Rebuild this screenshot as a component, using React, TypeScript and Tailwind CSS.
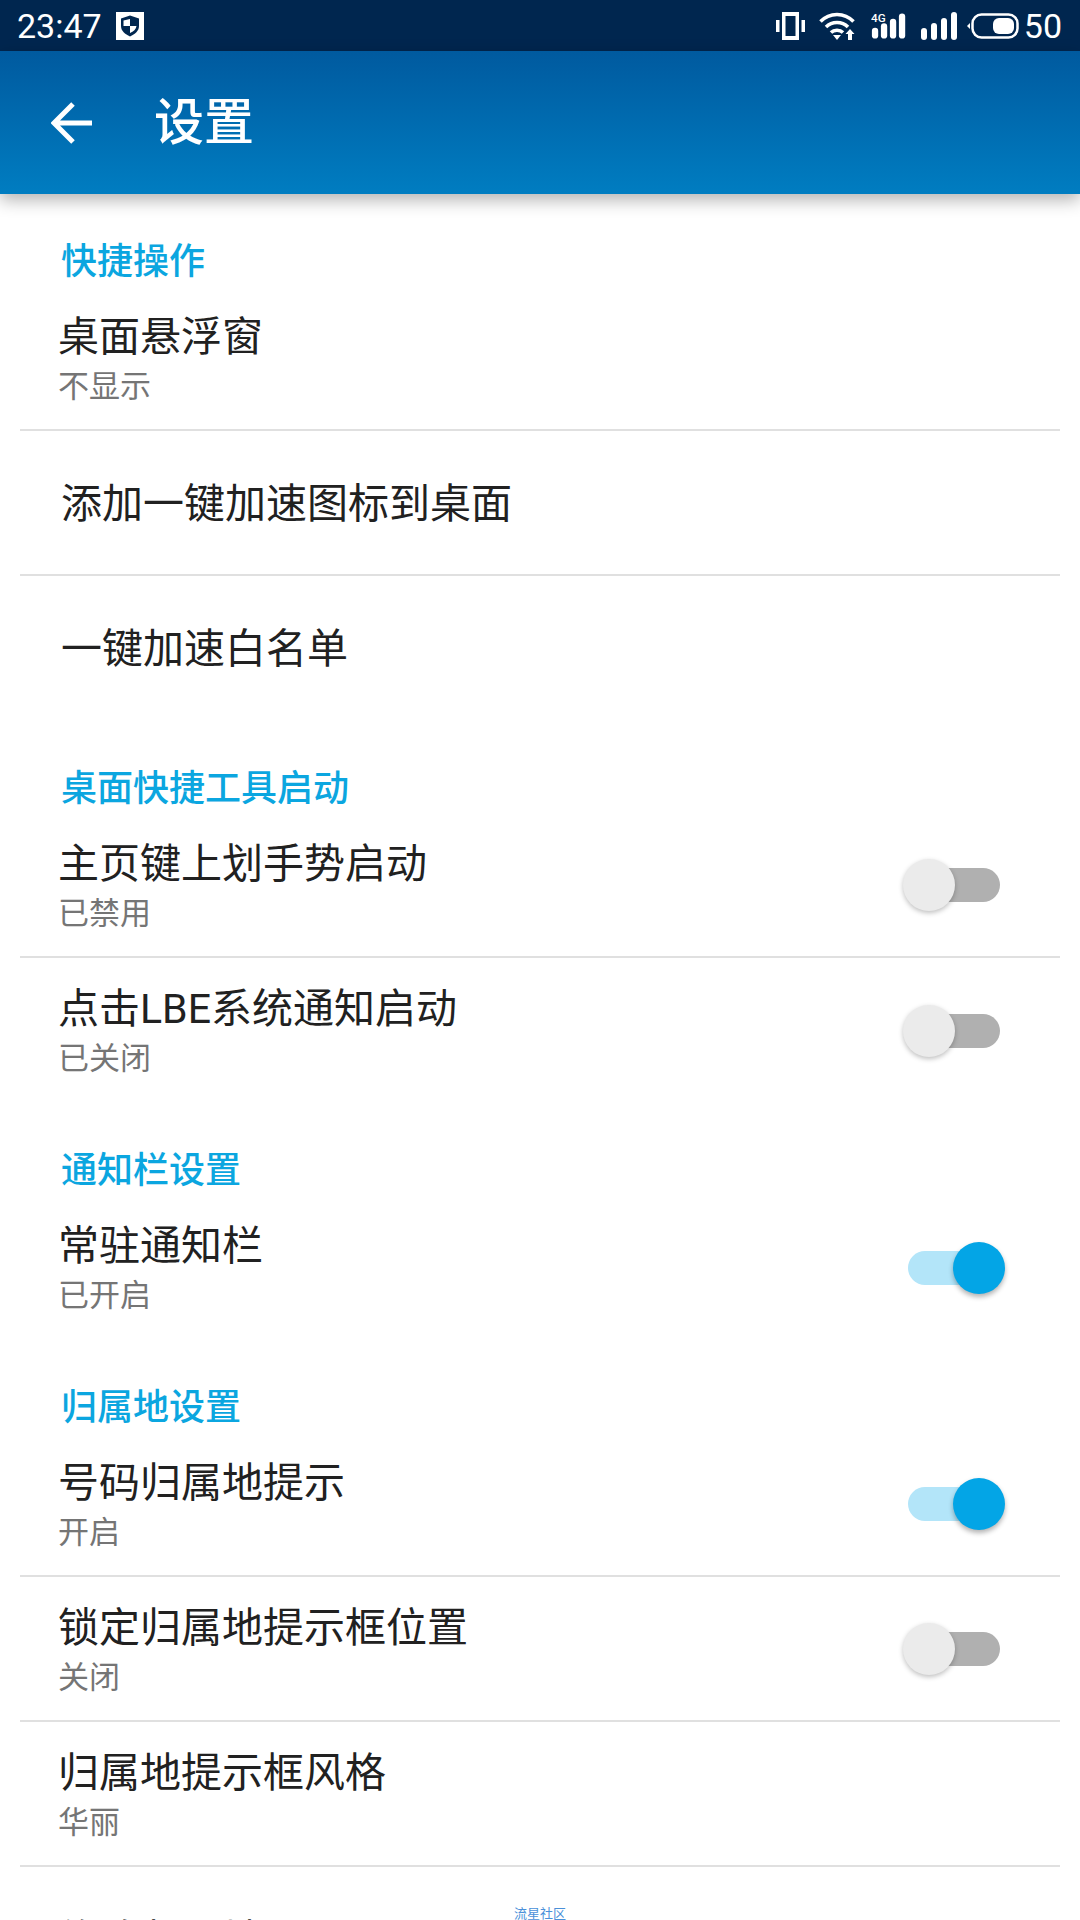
import React from "react";

function Toggle({ on }: { on: boolean }) {
  if (on) {
    return (
      <div className="relative w-[97px] h-[52px] mr-[55px] flex items-center">
        <div className="w-[70px] h-[34px] rounded-full bg-[#b3e5f9]" />
        <div className="absolute right-0 top-0 w-[52px] h-[52px] rounded-full bg-[#03a5e6] shadow-[0_3px_5px_rgba(0,0,0,0.3)]" />
      </div>
    );
  }
  return (
    <div className="relative w-[97px] h-[52px] mr-[60px] flex items-center justify-end">
      <div className="w-[70px] h-[34px] rounded-full bg-[#b0b0b0]" />
      <div className="absolute left-0 top-0 w-[52px] h-[52px] rounded-full bg-[#ebebeb] shadow-[0_2px_5px_rgba(0,0,0,0.25)]" />
    </div>
  );
}

function Row({ title, sub, on, divider = true }: { title: string; sub: string; on?: boolean; divider?: boolean }) {
  return (
    <div className={divider ? "mx-5 h-[145px] border-b-2 border-[#e0e0e0] flex items-center justify-between" : "mx-5 h-[145px] flex items-center justify-between"}>
      <div className="pl-[38px] self-start pt-[26px]">
        <div className="text-[41px] leading-[50px] text-[#212121]">{title}</div>
        <div className="text-[31px] leading-[50px] text-[#757575]">{sub}</div>
      </div>
      {on !== undefined && <Toggle on={on} />}
    </div>
  );
}

function Header({ text }: { text: string }) {
  return <div className="h-[92px] flex items-end pb-[2px] pl-[61px] text-[36px] leading-[44px] font-medium text-[#0ba6e0]">{text}</div>;
}

export default function App() {
  return (
    <div className="relative w-[1080px] h-[1920px] overflow-hidden bg-white font-['Roboto','Noto_Sans_CJK_SC',sans-serif]">
      <div className="h-[51px] bg-[#00264f] flex items-center justify-between pl-[17px] pr-[18px] text-white">
        <div className="flex items-center gap-[14px]">
          <span className="text-[34px] leading-none">23:47</span>
          <svg width="28" height="28" viewBox="0 0 28 28">
            <rect width="28" height="28" fill="#fff" />
            <path d="M14 3.500l9 3v7.500c0 5-4 8-9 10.500-5-2.500-9-5.500-9-10.500V6.500z" fill="#00264f" />
            <path d="M14 7v7H7.500V8.500zM14 14h6.500c-.4 3.500-3 5.500-6.500 7z" fill="#fff" />
          </svg>
        </div>
        <div className="flex items-center">
          <svg width="29" height="28" viewBox="0 0 29 28" fill="#fff" className="mr-[14px]">
            <path d="M6 0h17v28H6zm3.500 4v20h10V4z" fillRule="evenodd" />
            <rect x="0" y="8" width="3.500" height="12" />
            <rect x="25.500" y="8" width="3.500" height="12" />
          </svg>
          <svg width="36" height="28" viewBox="0 0 36 28" fill="none" stroke="#fff" strokeWidth="3.500" className="mr-[16px]">
            <path d="M1.500 9.500c9-9.500 24-9.500 33 0" />
            <path d="M7 15c6-6 16-6 22 0" />
            <path d="M12 20.500c3-3 9-3 12 0" />
            <path d="M14 23h8l-4 5z" fill="#fff" stroke="none" />
            <path d="M31 17l4.500 5H33v6h-4v-6h-2.500z" fill="#fff" stroke="none" />
          </svg>
          <svg width="36" height="30" viewBox="0 0 40 30" fill="#fff" className="mr-[14px]">
            <text x="0" y="10" fontSize="13" fontFamily="Roboto" fontWeight="500">4G</text>
            <rect x="1" y="17" width="7" height="12" rx="3.500" />
            <rect x="11" y="12" width="7" height="17" rx="3.500" />
            <rect x="21" y="7" width="7" height="22" rx="3.500" />
            <rect x="31" y="1" width="7" height="28" rx="3.500" />
          </svg>
          <svg width="36" height="30" viewBox="0 0 36 30" fill="#fff" className="mr-[10px]">
            <rect x="0" y="17" width="6" height="12" rx="3" />
            <rect x="10" y="12" width="6" height="17" rx="3" />
            <rect x="20" y="7" width="6" height="22" rx="3" />
            <rect x="30" y="1" width="6" height="28" rx="3" />
          </svg>
          <svg width="52" height="26" viewBox="0 0 52 26" fill="none" className="mr-[5px]">
            <path d="M3 10v6l-3-3z" fill="#fff" />
            <rect x="5.500" y="1.500" width="45" height="23" rx="9" stroke="#fff" strokeWidth="2.500" />
            <rect x="26" y="5" width="21" height="16" rx="6" fill="#fff" />
          </svg>
          <span className="text-[34px] leading-none">50</span>
        </div>
      </div>

      <div className="relative z-10 h-[143px] bg-gradient-to-b from-[#005a9f] to-[#007dc1] shadow-[0_6px_16px_rgba(0,0,0,0.3)] flex items-center text-white">
        <svg width="42" height="42" viewBox="0 0 42 42" fill="none" stroke="#fff" strokeWidth="5" className="ml-[51px]">
          <path d="M41 21H3M22 2L3 21l19 19" />
        </svg>
        <span className="ml-[61px] text-[50px] leading-none font-medium">设置</span>
      </div>

      <Header text="快捷操作" />
      <Row title="桌面悬浮窗" sub="不显示" />
      <div className="mx-5 h-[145px] border-b-2 border-[#e0e0e0] flex items-center pt-[5px] pl-[41px] text-[41px] text-[#212121]">添加一键加速图标到桌面</div>
      <div className="mx-5 h-[145px] flex items-center pt-[3px] pl-[41px] text-[41px] text-[#212121]">一键加速白名单</div>
      <Header text="桌面快捷工具启动" />
      <Row title="主页键上划手势启动" sub="已禁用" on={false} />
      <Row title="点击LBE系统通知启动" sub="已关闭" on={false} divider={false} />
      <Header text="通知栏设置" />
      <Row title="常驻通知栏" sub="已开启" on divider={false} />
      <Header text="归属地设置" />
      <Row title="号码归属地提示" sub="开启" on />
      <Row title="锁定归属地提示框位置" sub="关闭" on={false} />
      <Row title="归属地提示框风格" sub="华丽" />
      <div className="mx-5 h-[145px] flex items-center pt-[3px] pl-[38px] text-[41px] text-[#212121]">修改归属地</div>

      <div className="absolute left-[514px] top-[1907px] text-[13px] leading-[14px] text-[#4a90d9]">流星社区</div>
    </div>
  );
}
